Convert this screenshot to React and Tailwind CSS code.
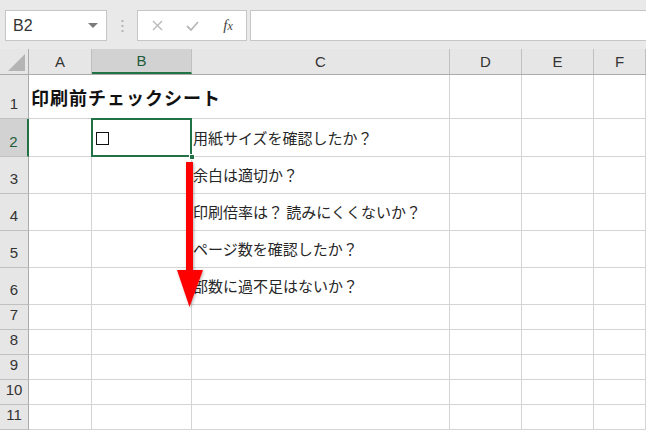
import React from 'react'

const COLS = [
  { label: 'A', w: 'w-[63px]' },
  { label: 'B', w: 'w-[100px]' },
  { label: 'C', w: 'w-[258px]' },
  { label: 'D', w: 'w-[72px]' },
  { label: 'E', w: 'w-[72px]' },
  { label: 'F', w: 'flex-1' },
]

const ROWS = [
  { n: 1, h: 'h-[44px]' },
  { n: 2, h: 'h-[38px]' },
  { n: 3, h: 'h-[37px]' },
  { n: 4, h: 'h-[37px]' },
  { n: 5, h: 'h-[37px]' },
  { n: 6, h: 'h-[37px]' },
  { n: 7, h: 'h-[25px]' },
  { n: 8, h: 'h-[25px]' },
  { n: 9, h: 'h-[25px]' },
  { n: 10, h: 'h-[25px]' },
  { n: 11, h: 'h-[25px]' },
]

// C列のチェック項目
const ITEMS = {
  2: '用紙サイズを確認したか？',
  3: '余白は適切か？',
  4: '印刷倍率は？ 読みにくくないか？',
  5: 'ページ数を確認したか？',
  6: '部数に過不足はないか？',
}

const jp = "font-['Noto_Sans_CJK_JP','Noto_Sans',sans-serif]"
const ui = "font-['Liberation_Sans','DejaVu_Sans',sans-serif]"

function FormulaBar() {
  return (
    <div className="flex items-start gap-0 h-[49px] pt-[10px] bg-[#e9e9e9]">
      <div className="ml-[5px] w-[102px] h-[31px] bg-white border border-[#c6c6c6] flex items-center justify-between pl-[7px] pr-[8px]">
        <span className={`${ui} text-[16px] text-[#333]`}>B2</span>
        <svg width="10" height="6" viewBox="0 0 10 6"><polygon points="0,0 10,0 5,5" fill="#7a7a7a" /></svg>
      </div>
      <div className="w-[30px] h-[31px] flex items-center justify-center">
        <svg width="3" height="12" viewBox="0 0 3 12">
          <rect x="0.5" y="0" width="2" height="2" fill="#b5b5b5" />
          <rect x="0.5" y="5" width="2" height="2" fill="#b5b5b5" />
          <rect x="0.5" y="10" width="2" height="2" fill="#b5b5b5" />
        </svg>
      </div>
      <div className="w-[110px] h-[31px] bg-white border border-[#c6c6c6] flex items-center">
        <div className="w-[36px] flex justify-center pl-[2px]">
          <svg width="11" height="11" viewBox="0 0 11 11"><path d="M1 1 L10 10 M10 1 L1 10" stroke="#b9b9b9" strokeWidth="1.4" /></svg>
        </div>
        <div className="w-[36px] flex justify-center">
          <svg width="13" height="10" viewBox="0 0 13 10"><path d="M1 5 L5 9 L12 1" stroke="#b9b9b9" strokeWidth="1.8" fill="none" /></svg>
        </div>
        <div className="flex-1 flex justify-center">
          <span className="font-['Liberation_Serif',serif] italic text-[15px] text-[#444] leading-none">
            f<span className="text-[12px]">x</span>
          </span>
        </div>
      </div>
      <div className="ml-[3px] flex-1 h-[31px] bg-white border-y border-l border-[#c6c6c6]" />
    </div>
  )
}

function HeaderRow() {
  return (
    <div className="flex h-[26px] bg-[#e6e6e6] border-b border-[#ababab]">
      <div className="w-[29px] border-r border-[#ababab] relative">
        <svg className="absolute left-[8px] top-[5px]" width="17" height="17" viewBox="0 0 17 17">
          <polygon points="17,0 17,17 0,17" fill="#b4b4b4" />
        </svg>
      </div>
      {COLS.map((c) => (
        <div
          key={c.label}
          className={`${c.w} flex items-center justify-center border-r ${
            c.label === 'B'
              ? 'bg-[#d2d2d2] border-[#c0c0c0] border-b-2 border-b-[#217346] text-[#1e5b3a]'
              : 'border-[#c0c0c0] text-[#333]'
          } ${ui} text-[15px] pt-[2px]`}
        >
          {c.label}
        </div>
      ))}
    </div>
  )
}

function Row({ n, h }) {
  const sel = n === 2
  return (
    <div className={`flex ${h}`}>
      <div
        className={`w-[29px] flex items-end justify-center pb-[3px] border-b ${ui} text-[15px] ${
          sel
            ? 'bg-[#d2d2d2] border-r-2 border-r-[#217346] border-b-[#c0c0c0] text-[#1e5b3a]'
            : 'bg-[#e6e6e6] border-r border-r-[#ababab] border-b-[#c0c0c0] text-[#333]'
        }`}
      >
        {n}
      </div>
      {COLS.map((c) => {
        // 1行目はタイトルがはみ出すのでA・B列の縦線を消す
        const hideRight = n === 1 && (c.label === 'A' || c.label === 'B')
        return (
          <div
            key={c.label}
            className={`${c.w} relative border-b border-[#d4d4d4] flex items-center ${
              hideRight ? 'border-r border-r-transparent' : 'border-r'
            }`}
          >
            {n === 1 && c.label === 'A' && (
              <span className={`${jp} absolute left-[2px] top-[9px] z-10 whitespace-nowrap text-[18px] font-bold text-[#111] tracking-[1px]`}>
                印刷前チェックシート
              </span>
            )}
            {sel && c.label === 'B' && (
              <>
                <span className="ml-[4px] mt-[1px] block w-[13px] h-[13px] border-[1.5px] border-[#111]" aria-label="☐" />
                <div className="absolute -left-[1px] -top-[1px] right-[-1px] bottom-[-1px] border-2 border-[#217346] pointer-events-none" />
                <div className="absolute -right-[4px] -bottom-[4px] w-[6px] h-[6px] bg-[#217346] border border-white z-10" />
              </>
            )}
            {c.label === 'C' && ITEMS[n] && (
              <span className={`${jp} pl-[1px] pt-[1px] whitespace-nowrap text-[15px] text-[#262626]`}>{ITEMS[n]}</span>
            )}
          </div>
        )
      })}
    </div>
  )
}

export default function App() {
  return (
    <div className="relative w-[646px] h-[431px] overflow-hidden bg-white">
      <FormulaBar />
      <HeaderRow />
      {ROWS.map((r) => (
        <Row key={r.n} {...r} />
      ))}
      {/* 下向きの赤い矢印 */}
      <svg className="absolute left-0 top-0 pointer-events-none" width="646" height="431">
        <defs>
          <filter id="sh" x="-50%" y="-10%" width="200%" height="130%">
            <feDropShadow dx="1" dy="1" stdDeviation="1.5" floodColor="#000" floodOpacity="0.3" />
          </filter>
        </defs>
        <g filter="url(#sh)">
          <rect x="186" y="162" width="7" height="110" fill="#ff0000" />
          <polygon points="177,270 203,270 189.5,307" fill="#ff0000" />
        </g>
      </svg>
    </div>
  )
}
